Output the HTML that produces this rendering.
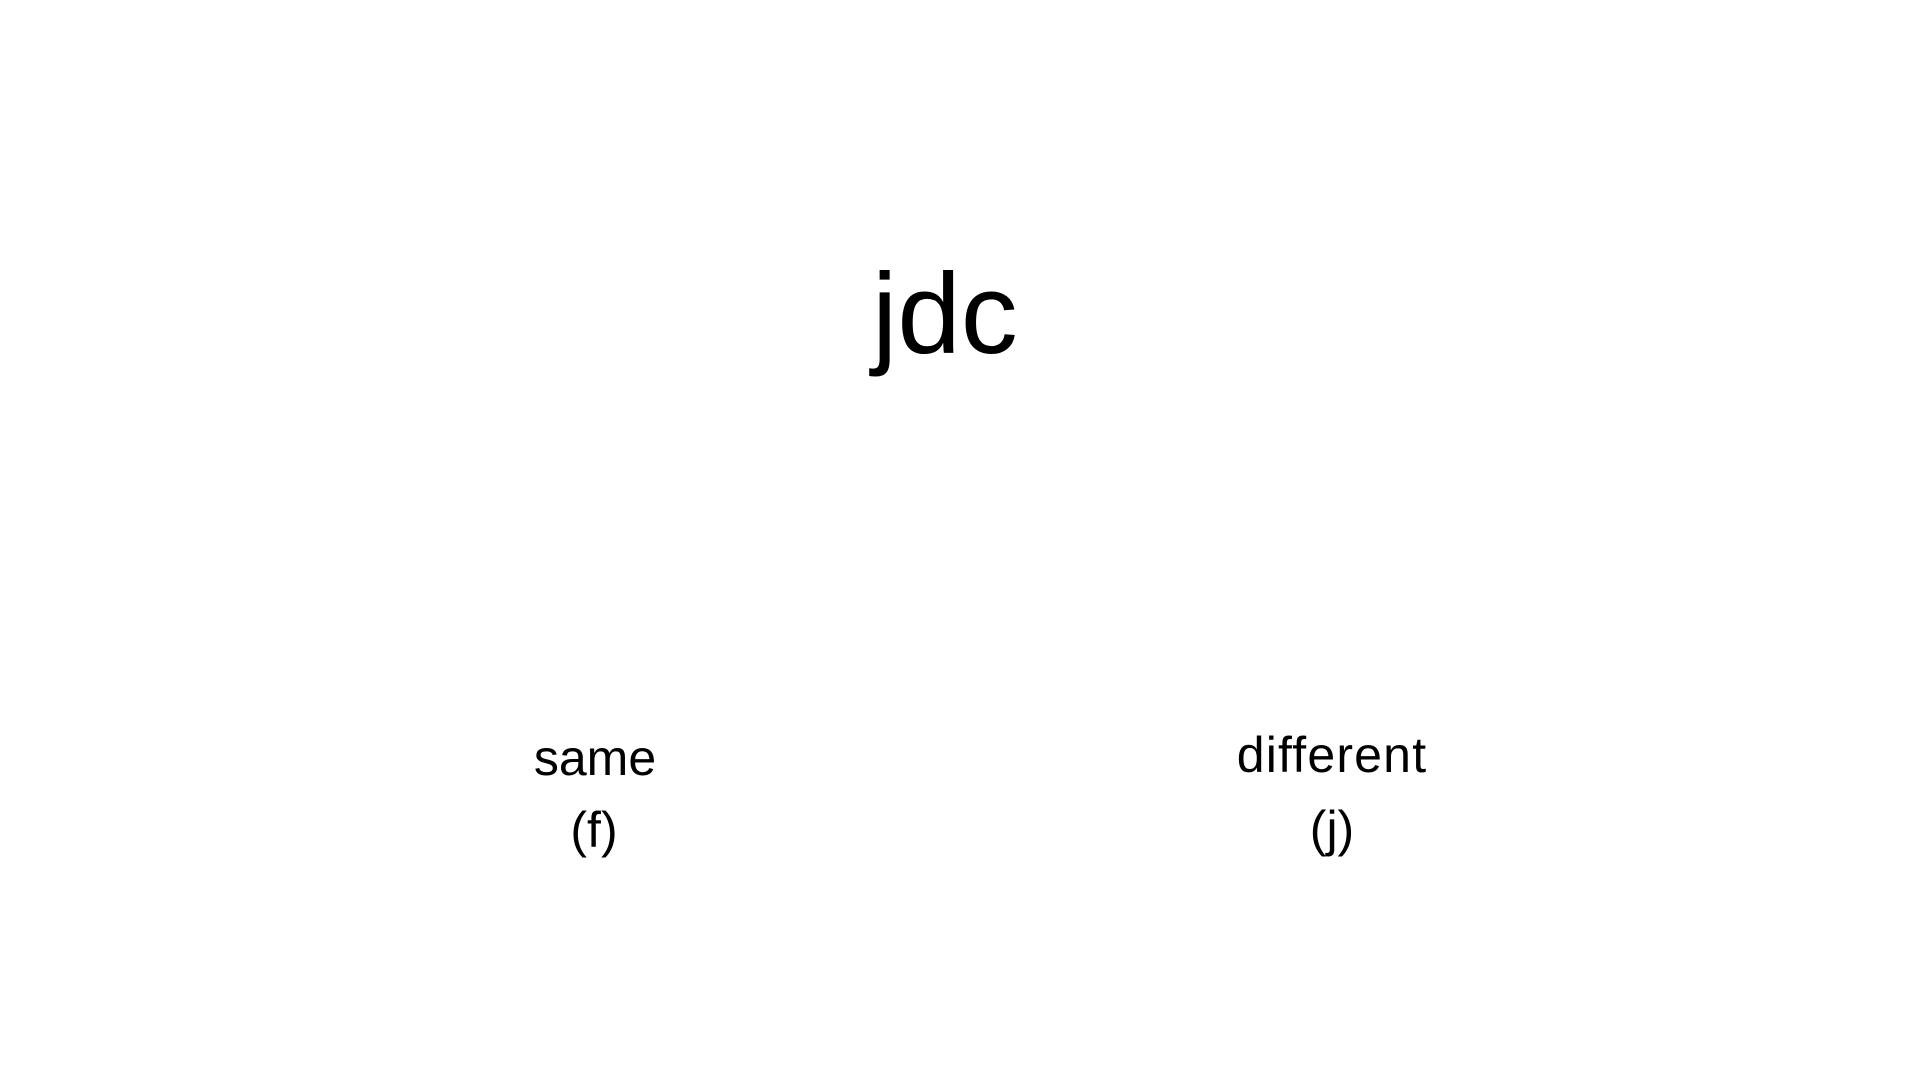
<!DOCTYPE html>
<html><head><meta charset="utf-8"><style>
html,body{margin:0;padding:0;width:1920px;height:1080px;background:#fff;overflow:hidden}
.t{position:absolute;font-family:"Liberation Sans",Arial,sans-serif;color:#000;white-space:nowrap;line-height:1}
.s{font-size:50px;transform:translateX(-50%)}
</style></head><body>
<div class="t" style="left:872px;top:258px;font-size:114px;">jdc</div>
<div class="t s" style="left:595px;top:733px;">same</div>
<div class="t s" style="left:594px;top:805px;">(f)</div>
<div class="t s" style="left:1332px;top:730px;letter-spacing:1.2px;">different</div>
<div class="t s" style="left:1332px;top:804px;">(j)</div>
</body></html>
